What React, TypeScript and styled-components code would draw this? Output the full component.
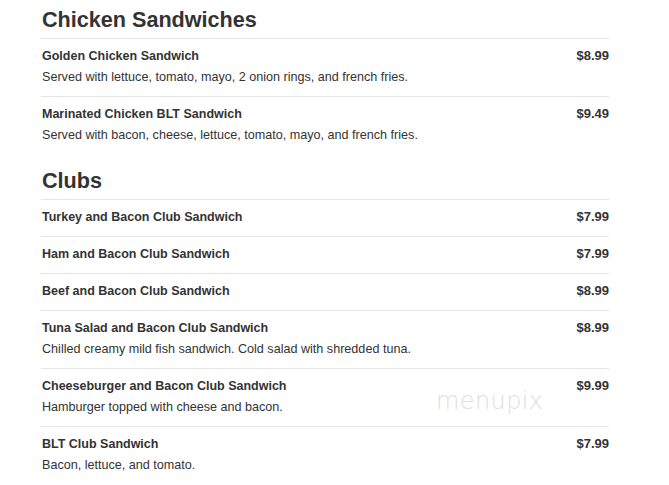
import React from "react";
import styled, { createGlobalStyle } from "styled-components";

const Global = createGlobalStyle`
  html, body { margin: 0; padding: 0; background: #fff; }
  body { font-family: "Liberation Sans", Arial, sans-serif; color: #333; }
`;

const Page = styled.div`
  position: relative;
  width: 568px;
  margin-left: 41px;
  padding-top: 8px;
`;

const Section = styled.section`
  & + & { margin-top: 15px; }
`;

const Heading = styled.h2`
  margin: 0 0 6px 1px;
  font-size: 21.6px;
  line-height: 24px;
  font-weight: bold;
  color: #333;
`;

const Item = styled.div`
  border-top: 1px solid #e5e5e5;
  padding: 8px 0 10px 1px;
`;

const Row = styled.div`
  display: flex;
  justify-content: space-between;
  align-items: baseline;
`;

const Name = styled.div`
  font-size: 12.5px;
  line-height: 18px;
  font-weight: bold;
  color: #333;
`;

const Price = styled.div`
  font-size: 13px;
  line-height: 18px;
  font-weight: bold;
  color: #333;
`;

const Desc = styled.div`
  margin-top: 3px;
  font-size: 12.6px;
  line-height: 18px;
  color: #333;
`;

const Watermark = styled.div`
  position: absolute;
  left: 395px;
  top: 387px;
  font-family: "DejaVu Sans", sans-serif;
  font-weight: 200;
  font-size: 24px;
  letter-spacing: 0.4px;
  color: #e0e0e0;
  pointer-events: none;
`;

type MenuItem = { name: string; price: string; desc?: string };

const sections: { title: string; items: MenuItem[] }[] = [
  {
    title: "Chicken Sandwiches",
    items: [
      { name: "Golden Chicken Sandwich", price: "$8.99", desc: "Served with lettuce, tomato, mayo, 2 onion rings, and french fries." },
      { name: "Marinated Chicken BLT Sandwich", price: "$9.49", desc: "Served with bacon, cheese, lettuce, tomato, mayo, and french fries." },
    ],
  },
  {
    title: "Clubs",
    items: [
      { name: "Turkey and Bacon Club Sandwich", price: "$7.99" },
      { name: "Ham and Bacon Club Sandwich", price: "$7.99" },
      { name: "Beef and Bacon Club Sandwich", price: "$8.99" },
      { name: "Tuna Salad and Bacon Club Sandwich", price: "$8.99", desc: "Chilled creamy mild fish sandwich. Cold salad with shredded tuna." },
      { name: "Cheeseburger and Bacon Club Sandwich", price: "$9.99", desc: "Hamburger topped with cheese and bacon." },
      { name: "BLT Club Sandwich", price: "$7.99", desc: "Bacon, lettuce, and tomato." },
    ],
  },
];

export default function App() {
  return (
    <>
      <Global />
      <Page>
        {sections.map((s) => (
          <Section key={s.title}>
            <Heading>{s.title}</Heading>
            {s.items.map((it) => (
              <Item key={it.name}>
                <Row>
                  <Name>{it.name}</Name>
                  <Price>{it.price}</Price>
                </Row>
                {it.desc && <Desc>{it.desc}</Desc>}
              </Item>
            ))}
          </Section>
        ))}
        <Watermark>menupix</Watermark>
      </Page>
    </>
  );
}
